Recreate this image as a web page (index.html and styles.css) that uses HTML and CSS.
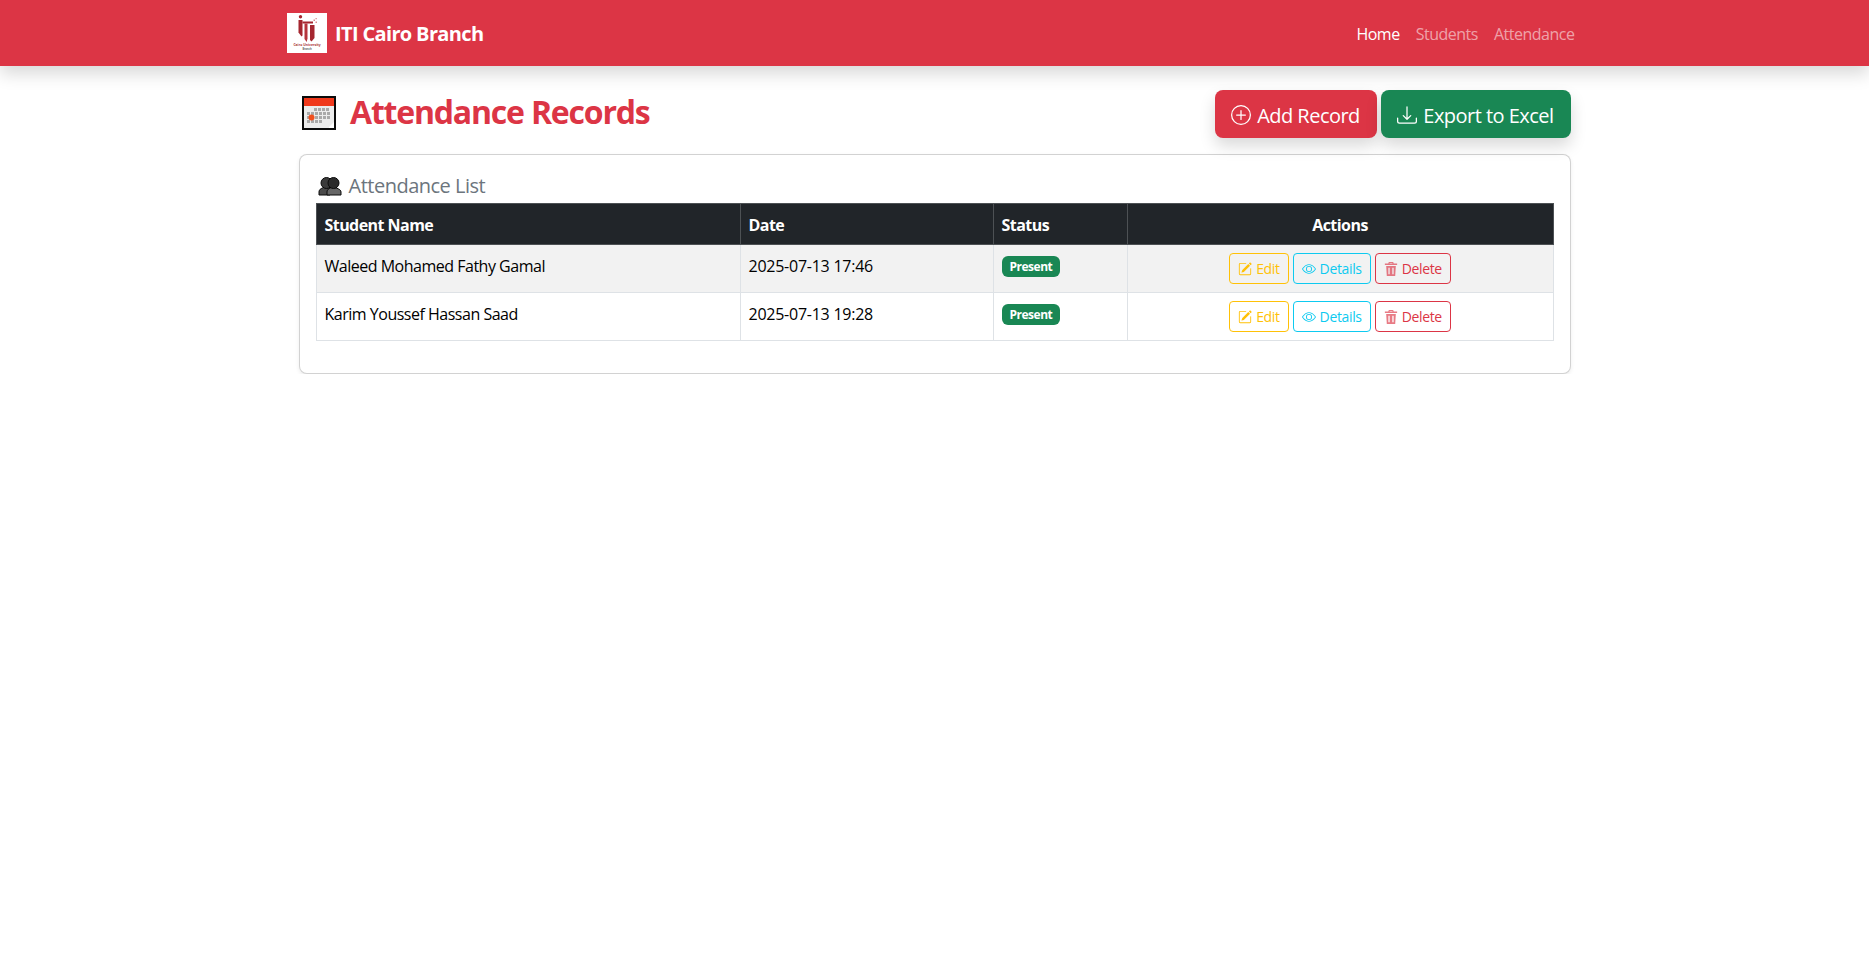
FILE: index.html
```html
<!DOCTYPE html>
<html lang="en">
<head>
<meta charset="utf-8">
<title>Attendance Records</title>
<link rel="stylesheet" href="styles.css">
</head>
<body>
<nav class="navbar">
  <div class="nav-inner">
    <a class="brand" href="#">
      <svg class="logo" viewBox="0 0 40 40" aria-hidden="true">
        <rect width="40" height="40" fill="#fff"/>
        <circle cx="13.500" cy="3.800" r="1.700" fill="#a5262f"/>
        <path d="M11.500 7h4v15.500l-1 1-3-4z" fill="#a5262f"/>
        <path d="M15.500 8.500h10.500v2h-10.500z" fill="#a5262f"/>
        <path d="M17.500 10.500h3v15l-.8 3.500-2.200-3z" fill="#b5343c"/>
        <path d="M23 12h4.500v13l-3 3.500-1.500-1.500z" fill="#a5262f"/>
        <path d="M26.500 6.500h1.500v1.500h-1.500zM28.500 8.500h1.500v1.500h-1.500zM28.500 5h1.300v1.300h-1.300z" fill="#d98b8f"/>
        <text x="20" y="32.800" class="logo-t1">Cairo University</text>
        <text x="20" y="37" class="logo-t2">Branch</text>
      </svg>
      <span>ITI Cairo Branch</span>
    </a>
    <ul class="nav-links">
      <li><a class="nav-link active" href="#">Home</a></li>
      <li><a class="nav-link" href="#">Students</a></li>
      <li><a class="nav-link" href="#">Attendance</a></li>
    </ul>
  </div>
</nav>

<main class="page">
  <header class="page-head">
    <h1 class="page-title">
      <svg class="cal-icon" viewBox="0 0 34 34" aria-hidden="true">
        <rect width="34" height="34" fill="#0b0b0b"/>
        <rect x="2" y="2" width="30" height="30" fill="#ececec"/>
        <rect x="2" y="2" width="30" height="8" fill="#f0391c"/>
        <path fill="#a9a9a9" d="M12 12h3v3h-3zM16 12h3v3h-3zM20 12h3v3h-3zM24 12h3v3h-3zM5 16h3v3H5zM9 16h3v3H9zM13 16h3v3h-3zM17 16h3v3h-3zM21 16h3v3h-3zM25 16h3v3h-3zM5 20h3v3H5zM13 20h3v3h-3zM17 20h3v3h-3zM21 20h3v3h-3zM25 20h3v3h-3zM5 24h3v3H5zM9 24h3v3H9zM13 24h3v3h-3zM17 24h3v3h-3z"/>
        <circle cx="9.500" cy="21.500" r="3" fill="#f0501f"/>
        <path d="M27 31l5-5v6h-5z" fill="#fff"/>
      </svg>
      <span>Attendance Records</span>
    </h1>
    <div class="head-actions">
      <a class="btn-lg btn-red" href="#">
        <svg class="bi bi-lg" viewBox="0 0 16 16" aria-hidden="true"><path d="M8 15A7 7 0 1 1 8 1a7 7 0 0 1 0 14m0 1A8 8 0 1 0 8 0a8 8 0 0 0 0 16"/><path d="M8 4a.5.5 0 0 1 .5.5v3h3a.5.5 0 0 1 0 1h-3v3a.5.5 0 0 1-1 0v-3h-3a.5.5 0 0 1 0-1h3v-3A.5.5 0 0 1 8 4"/></svg>
        <span>Add Record</span>
      </a>
      <a class="btn-lg btn-green" href="#">
        <svg class="bi bi-lg" viewBox="0 0 16 16" aria-hidden="true"><path d="M.5 9.900a.5.5 0 0 1 .5.5v2.500a1 1 0 0 0 1 1h12a1 1 0 0 0 1-1v-2.500a.5.5 0 0 1 1 0v2.500a2 2 0 0 1-2 2H2a2 2 0 0 1-2-2v-2.500a.5.5 0 0 1 .5-.5"/><path d="M7.646 11.854a.5.5 0 0 0 .708 0l3-3a.5.5 0 0 0-.708-.708L8.500 10.293V1.500a.5.5 0 0 0-1 0v8.793L5.354 8.146a.5.5 0 1 0-.708.708z"/></svg>
        <span>Export to Excel</span>
      </a>
    </div>
  </header>

  <section class="card">
    <h5 class="card-title">
      <svg class="people-icon" viewBox="0 0 24 20" aria-hidden="true">
        <path d="M1 19v-3c0-3 3-4 6-5h5v8z" fill="#4a4a4a" stroke="#0a0a0a"/>
        <path d="M9 19v-3c0-3 3-4 6-5 3 1 8 2 8 5v3z" fill="#666" stroke="#0a0a0a"/>
        <circle cx="8.500" cy="7" r="5.500" fill="#3a3a3a" stroke="#0a0a0a"/>
        <circle cx="15.500" cy="7" r="5.500" fill="#2b2b2b" stroke="#0a0a0a"/>
      </svg>
      <span>Attendance List</span>
    </h5>
    <table class="table">
      <colgroup>
        <col class="c-name"><col class="c-date"><col class="c-status"><col class="c-actions">
      </colgroup>
      <thead>
        <tr>
          <th>Student Name</th>
          <th>Date</th>
          <th>Status</th>
          <th class="center">Actions</th>
        </tr>
      </thead>
      <tbody>
        <tr class="striped">
          <td>Waleed Mohamed Fathy Gamal</td>
          <td class="date">2025-07-13 17:46</td>
          <td><span class="badge">Present</span></td>
          <td class="center actions-cell">
            <div class="row-actions">
              <a class="btn-sm edit" href="#"><svg class="bi" viewBox="0 0 16 16" aria-hidden="true"><path d="M15.502 1.940a.5.5 0 0 1 0 .706L14.459 3.690l-2-2L13.502.646a.5.5 0 0 1 .707 0l1.293 1.293zm-1.750 2.456-2-2L4.939 9.210a.5.5 0 0 0-.121.196l-.805 2.414a.25.25 0 0 0 .316.316l2.414-.805a.5.5 0 0 0 .196-.12l6.813-6.814z"/><path fill-rule="evenodd" d="M1 13.500A1.500 1.500 0 0 0 2.500 15h11a1.500 1.500 0 0 0 1.500-1.500v-6a.5.5 0 0 0-1 0v6a.5.5 0 0 1-.5.5h-11a.5.5 0 0 1-.5-.5v-11a.5.5 0 0 1 .5-.5H9a.5.5 0 0 0 0-1H2.500A1.500 1.500 0 0 0 1 2.500z"/></svg> <span>Edit</span></a>
              <a class="btn-sm details" href="#"><svg class="bi" viewBox="0 0 16 16" aria-hidden="true"><path d="M16 8s-3-5.500-8-5.500S0 8 0 8s3 5.500 8 5.500S16 8 16 8M1.173 8a13 13 0 0 1 1.660-2.043C4.120 4.668 5.880 3.500 8 3.500s3.879 1.168 5.168 2.457A13 13 0 0 1 14.828 8q-.086.13-.195.288c-.335.48-.83 1.120-1.465 1.755C11.879 11.332 10.119 12.500 8 12.500s-3.879-1.168-5.168-2.457A13 13 0 0 1 1.172 8z"/><path d="M8 5.500a2.500 2.500 0 1 0 0 5 2.500 2.500 0 0 0 0-5M4.500 8a3.500 3.500 0 1 1 7 0 3.500 3.500 0 0 1-7 0"/></svg> <span>Details</span></a>
              <a class="btn-sm delete" href="#"><svg class="bi trash" viewBox="0 0 16 16" aria-hidden="true"><path fill-rule="evenodd" d="M5.500 0h5l.6 1.800H15v1.700H1V1.800h3.900zM6.500 1l-.2.800h3.400L9.500 1zM2.500 4.500h11L12.800 16H3.200zM5 6.500v7.500h1.500V6.500zM9.500 6.500v7.500H11V6.500z"/></svg> <span>Delete</span></a>
            </div>
          </td>
        </tr>
        <tr>
          <td>Karim Youssef Hassan Saad</td>
          <td class="date">2025-07-13 19:28</td>
          <td><span class="badge">Present</span></td>
          <td class="center actions-cell">
            <div class="row-actions">
              <a class="btn-sm edit" href="#"><svg class="bi" viewBox="0 0 16 16" aria-hidden="true"><path d="M15.502 1.940a.5.5 0 0 1 0 .706L14.459 3.690l-2-2L13.502.646a.5.5 0 0 1 .707 0l1.293 1.293zm-1.750 2.456-2-2L4.939 9.210a.5.5 0 0 0-.121.196l-.805 2.414a.25.25 0 0 0 .316.316l2.414-.805a.5.5 0 0 0 .196-.12l6.813-6.814z"/><path fill-rule="evenodd" d="M1 13.500A1.500 1.500 0 0 0 2.500 15h11a1.500 1.500 0 0 0 1.500-1.500v-6a.5.5 0 0 0-1 0v6a.5.5 0 0 1-.5.5h-11a.5.5 0 0 1-.5-.5v-11a.5.5 0 0 1 .5-.5H9a.5.5 0 0 0 0-1H2.500A1.500 1.500 0 0 0 1 2.500z"/></svg> <span>Edit</span></a>
              <a class="btn-sm details" href="#"><svg class="bi" viewBox="0 0 16 16" aria-hidden="true"><path d="M16 8s-3-5.500-8-5.500S0 8 0 8s3 5.500 8 5.500S16 8 16 8M1.173 8a13 13 0 0 1 1.660-2.043C4.120 4.668 5.880 3.500 8 3.500s3.879 1.168 5.168 2.457A13 13 0 0 1 14.828 8q-.086.13-.195.288c-.335.48-.83 1.120-1.465 1.755C11.879 11.332 10.119 12.500 8 12.500s-3.879-1.168-5.168-2.457A13 13 0 0 1 1.172 8z"/><path d="M8 5.500a2.500 2.500 0 1 0 0 5 2.500 2.500 0 0 0 0-5M4.500 8a3.500 3.500 0 1 1 7 0 3.500 3.500 0 0 1-7 0"/></svg> <span>Details</span></a>
              <a class="btn-sm delete" href="#"><svg class="bi trash" viewBox="0 0 16 16" aria-hidden="true"><path fill-rule="evenodd" d="M5.500 0h5l.6 1.800H15v1.700H1V1.800h3.900zM6.500 1l-.2.800h3.400L9.500 1zM2.500 4.500h11L12.800 16H3.200zM5 6.500v7.500h1.500V6.500zM9.500 6.500v7.500H11V6.500z"/></svg> <span>Delete</span></a>
            </div>
          </td>
        </tr>
      </tbody>
    </table>
  </section>
</main>
</body>
</html>
```

FILE: styles.css
```css
* { box-sizing: border-box; }
html, body { margin: 0; padding: 0; }
body {
  font-family: "Open Sans", "Noto Sans", sans-serif;
  font-size: 16px;
  line-height: 1.5;
  color: #000;
  background: #fff;
  letter-spacing: -0.49px;
}
a { text-decoration: none; color: inherit; }

.navbar { height: 66px; background: #dc3545; box-shadow: 0 8px 16px rgba(0,0,0,.15); }
.nav-inner {
  width: 1320px; height: 100%; margin: 0 auto; padding: 0 12px 0 12.500px;
  display: flex; align-items: center; justify-content: space-between;
}
.brand { display: flex; align-items: center; gap: 8px; color: #fff; font-size: 20px; font-weight: 700; letter-spacing: -0.65px; }
.brand span { padding-top: 2px; }
.logo { width: 40px; height: 40px; display: block; }
.logo-t1 { font-size: 3.400px; fill: #a33; text-anchor: middle; font-family: "Open Sans", sans-serif; letter-spacing: 0; }
.logo-t2 { font-size: 2.600px; fill: #666; text-anchor: middle; font-family: "Open Sans", sans-serif; letter-spacing: 0; }
.nav-links { list-style: none; display: flex; margin: 0; padding: 0; }
.nav-link { display: block; padding: 9px 8px 7px; color: rgba(255,255,255,.55); }
.nav-link.active { color: #fff; }

.page { width: 1272px; margin: 24px auto 0; }
.page-head { display: flex; justify-content: space-between; align-items: flex-start; margin-bottom: 16px; }
.page-title {
  margin: 0; padding-left: 3.500px; display: flex; align-items: center; gap: 14px;
  font-size: 32px; font-weight: 700; line-height: 1.2; color: #dc3545; height: 46px; letter-spacing: -1.2px;
}
.page-title span { margin-top: -1px; }
.cal-icon { width: 34px; height: 34px; display: block; }
.head-actions { display: flex; gap: 4px; }
.btn-lg {
  display: flex; align-items: center; gap: 6px; height: 48px; padding: 0 17px 0 16.500px;
  font-size: 20px; color: #fff; border-radius: 8px; box-shadow: 0 8px 16px rgba(0,0,0,.15);
  letter-spacing: -0.53px;
}
.btn-lg span { padding-top: 3px; }
.btn-red { background: #dc3545; }
.btn-green { background: #198754; }
.bi { width: 14px; height: 14px; fill: currentColor; display: inline-block; flex: none; }
.bi-lg { width: 20px; height: 20px; margin-top: 1px; }
.trash { opacity: .65; }

.card {
  border: 1px solid rgba(0,0,0,.175); border-radius: 8px; padding: 16px;
  box-shadow: 0 2px 4px rgba(0,0,0,.075); background: #fff;
}
.card-title {
  margin: 0 0 5px; padding: 3px 0 0 2px; display: flex; align-items: center; gap: 7px;
  font-size: 20px; font-weight: 400; line-height: 24px; color: #6c757d; letter-spacing: -0.5px;
}
.people-icon { width: 24px; height: 20px; display: block; }

.table { width: 100%; border-collapse: collapse; table-layout: fixed; margin-bottom: 16px; }
.c-name { width: 424px; }
.c-date { width: 253px; }
.c-status { width: 134px; }
.table th, .table td { padding: 9px 8px 7px; border: 1px solid #dee2e6; vertical-align: top; text-align: left; }
.table th { background: #212529; color: #fff; font-weight: 700; border-color: #4d5154; letter-spacing: -0.55px; }
.table .date { letter-spacing: -0.25px; }
.table .center { text-align: center; }
.table .actions-cell { padding: 8px; }
.striped td { background: #f2f2f2; }
.badge {
  display: inline-block; padding: 4.500px 8px; border-radius: 6px; background: #198754; color: #fff;
  font-size: 12px; font-weight: 700; line-height: 1; margin-top: 2px; vertical-align: top;
}
.row-actions { display: flex; justify-content: center; gap: 4px; }
.btn-sm {
  display: flex; align-items: center; gap: 4px; height: 31px; padding: 0 8px;
  font-size: 14px; border: 1px solid; border-radius: 4px; letter-spacing: -0.35px;
}
.edit { color: #ffc107; border-color: #ffc107; }
.details { color: #0dcaf0; border-color: #0dcaf0; }
.delete { color: #dc3545; border-color: #dc3545; }
```
